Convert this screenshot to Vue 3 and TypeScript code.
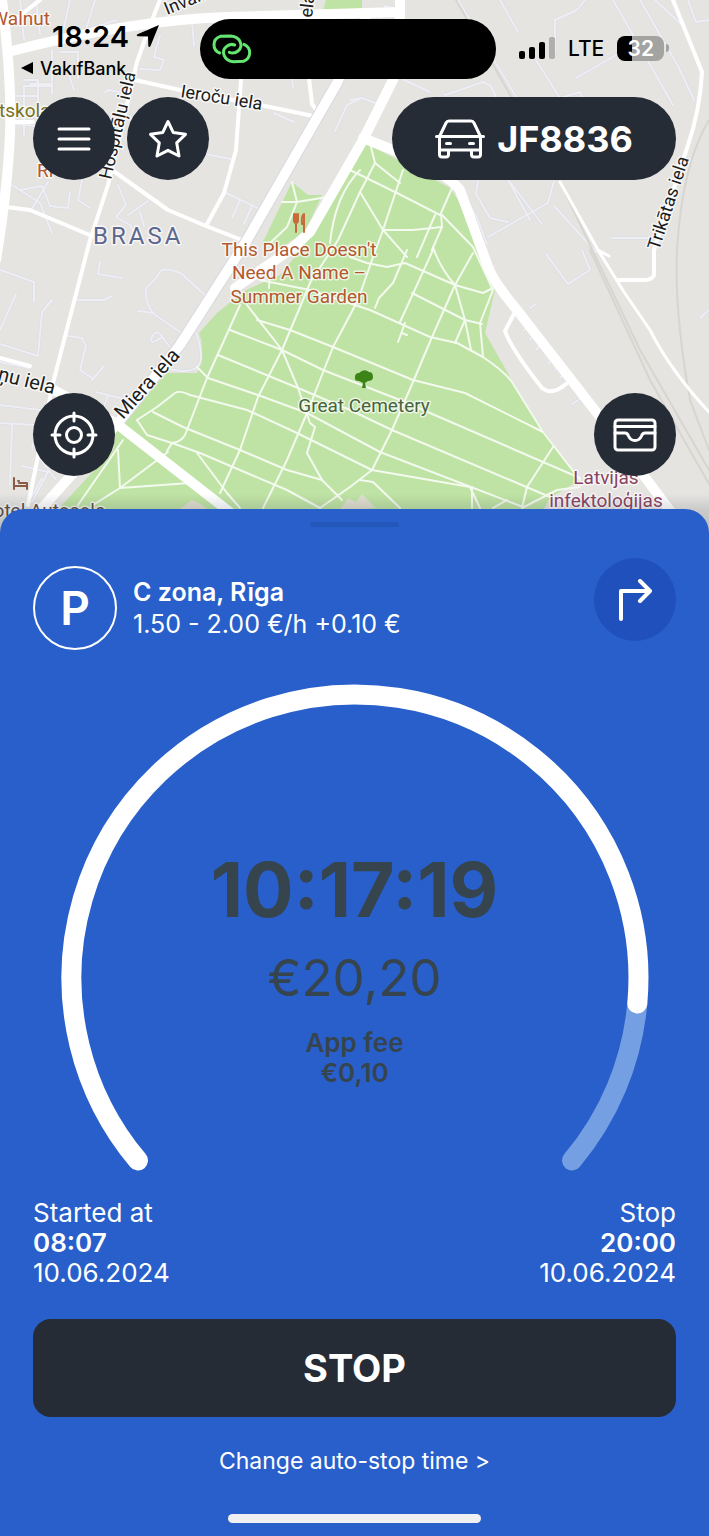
<script setup lang="ts">
interface Moment {
  label: string
  time: string
  date: string
}

const plate = 'JF8836'
const zone = { name: 'C zona, Rīga', price: '1.50 - 2.00 €/h +0.10 €' }
const session = { elapsed: '10:17:19', cost: '€20,20', feeLabel: 'App fee', fee: '€0,10' }
const moments: Moment[] = [
  { label: 'Started at', time: '08:07', date: '10.06.2024' },
  { label: 'Stop', time: '20:00', date: '10.06.2024' },
]

const lanes: string[] = [
  'M20 0L24 40M36 0l4 34M70 0l-6 28M95 0l-9 30 30 -10M52 50v36H24v50M24 80h14v28M16 96h22',
  'M60 52l18 0 0 26M64 60l10 30M30 84l22 0 0 10M160 35l-6 22 10 3-4 10-20-1M192 22l2 24M105 92l4-2 10 2',
  'M16 124l20 2M12 185l28 18 12 30M20 190l22-4 8 20 18 2 2-16M30 212l18-30M84 170l-6 30 12 8M118 185l8 20-10 12 14 8 6 10M128 215l20-14M140 212l4 14',
  'M205 154l26 5M226 193l38 18M240 200l-8 18M252 206l-8 18M292 78l1 10M335 131l12-26 12-6M274 113l20 9',
  'M0 270l34 12 0 20M16 294l-16 36M52 300l-10 12-4 44-38-12M0 362l30 6M100 262l-2 12 24 4M76 300l28 0 8-4M68 336l14 2 4 8-6 24 12 8M92 380l12-14',
  'M210 300l-28-26q-22-10-24 2l-12 12q-2 14 8 26l26 18M138 311l16 2M164 339q-8-12-12-2t10 0l8 10M196 332q10 30 0 36t-30 0',
  'M0 405l40 5M0 423l36 2-4 24M12 425l-2 60M22 466l26 6-16 30M38 456l18 24M42 478l-10 18M96 392l24 6M108 396l-4 10',
  'M375 32l10-26 8 2M350 100l12-2 16 6M404 80l26 12M445 95l38-13 8 4 6 14M458 0l60 100M500 0l18 32M536 60l24 38 20-6 4 8M555 54l0-34 22-10 8-10M576 78l42-24M613 0l60 105M640 0l38 66 16 34M688 0l8 22 13-2M655 0l26 24',
  'M478 180l-2 14 14 24 18 4M488 237l60-34 6-22M510 182l32 42M554 206l42 46M530 220l-22-40M612 238l38 0M546 254l22 30 22-14-8-20M463 192l14 26 10 26',
  'M524 330l5-5M530 340l5-7M536 350l5-6M548 364l6-7M555 370l7-6M560 378l6-6M572 404l8-5M530 308l6-4M700 318l9-8',
]

const cemeteryPaths: string[] = [
  'M240 305L207 378 185 435Q181 442 172 443L167 451',
  'M310 283L282 350 258 397 240 450 220 493',
  'M403 170L383 230 373 257 358 300 333 347 307 413 287 460 263 508',
  'M473 253L455 285 432 337 413 382 392 430 372 470 350 487 320 508',
  'M433 250L400 322M407 250L393 283 379 298 375 308M452 188L441 213 442 227 432 250M435 215L417 257',
  'M433 247Q440 268 455 285L465 320 471 350M465 320L455 343M442 215L473 247 493 290 480 323 483 357',
  'M350 170L397 193 440 215M360 192L383 230 407 257M383 230L413 230 442 227',
  'M370 143L375 163 360 192 338 240 310 283M375 163L400 183',
  'M350 257L367 263 387 267 405 263 455 285 483 293 493 288M412 293L465 320 482 324',
  'M260 280L310 290 370 310 430 337 457 343 483 357Q505 372 512 382L543 432',
  'M257 320L290 330 333 347 413 380 465 393 543 432 580 480',
  'M230 330L282 350 323 370 400 400 580 478',
  'M218 355L298 388 350 410 392 430 510 480 550 497',
  'M197 367L208 378 258 395 307 413 380 452 523 507',
  'M137 420L157 407 175 393Q180 390 190 395L247 410 297 433 372 470 470 487 480 508',
  'M153 412L183 427 240 450 287 470 322 480M137 420L147 435 172 443 200 453 287 490 320 508M197 453L227 493 240 508',
  'M282 350L247 305M282 350L298 388 310 423 315 427 307 453 322 480 342 500',
  'M118 450L120 488 190 483M93 505L120 488 168 452M123 440L78 505',
  'M553 447L527 487 522 508 557 490 580 487M360 480L373 482 400 508M472 487V508M493 508L507 500',
  'M405 323L398 342M402 333L407 335M360 170Q335 195 330 243M270 270L269 288',
  'M282 202L297 202 327 197M292 182L297 202 287 227 268 245',
]
</script>

<template>
  <main class="screen">
    <section class="stage">
      <svg class="map" viewBox="0 0 709 533" preserveAspectRatio="xMidYMin slice" aria-label="Map of Brasa">
        <path class="park" d="M365 143L400 161 450 188 458 200 484 258 495 290 485 333 510 377 543 430 580 480 550 498 530 533 40 533 60 507 113 450 117 424 167 373 197 373Q206 350 199 333L217 313 246 290 280 275 310 238Z" />
        <path class="park" d="M292 182L308 195 322 195 305 232 280 248 262 244ZM326 0H362V14H322Z" />
        <path class="clearing" d="M178 510l14-10 12 6 8 10zM340 510l8-12 8 4 6-8 14 14z" />
        <g class="lane-edge"><path v-for="d in lanes" :key="d" :d="d" /></g>
        <g class="lane"><path v-for="d in lanes" :key="d" :d="d" /></g>
        <g class="trail"><path v-for="d in cemeteryPaths" :key="d" :d="d" /></g>
        <g class="rail">
          <path d="M456 0L516 105M560 182L640 350 709 470M677 250Q674 310 690 400L709 450M709 120Q682 165 677 250M590 250L650 380 709 484" />
        </g>
        <g class="street">
          <path d="M160 0L150 25 137 62 108 185 90 240 53 383 28 505M135 80L180 90 270 107 318 117M241 80L236 150 224 193 206 226M112 170L168 210 206 226 247 242M309 78L312 104 320 115M10 122H33M6 207L30 210 92 236M40 0L12 22" />
          <path d="M673 0L702 72Q700 110 688 145L654 250V275Q652 280 645 280H619M516 310L505 331Q512 350 542 388 552 396 566 384M0 358L30 366" />
          <path class="thin" d="M560 182L598 250 609 256M598 250L624 292 650 330Q670 370 709 412" />
        </g>
        <path class="casing" d="M117 424L180 345 247 240 337 83 366 18" />
        <g class="avenue">
          <path d="M2 0Q12 80 10 133T-4 260" />
          <path d="M8 52Q130 20 227 17T400 12M400 0L400 17 393 80 363 140 310 232 290 250 235 288" />
          <path d="M34 517L117 424 180 345 247 240 337 83 366 18" />
          <path d="M363 138L393 150Q450 175 460 190L487 264Q492 280 517 310L597 413 680 524" />
          <path d="M50 388L117 424 240 520" />
        </g>
        <g class="street-name">
          <text x="167" y="15" transform="rotate(-22 167 15)">Invalīdu</text>
          <text x="312" y="18" transform="rotate(-84 312 18)">ela</text>
          <text x="180" y="97" transform="rotate(9 180 97)">Ieroču iela</text>
          <text x="111" y="180" transform="rotate(-77 111 180)">Hospitāļu iela</text>
          <text x="659" y="251" transform="rotate(-72 659 251)">Trikātas iela</text>
          <text class="major" x="123" y="420" transform="rotate(-48 123 420)">Miera iela</text>
          <text class="major" x="-3" y="380" transform="rotate(14 -3 380)">ņu iela</text>
        </g>
        <text class="district" x="93" y="244">BRASA</text>
        <g class="place food">
          <text x="50" y="25" text-anchor="end">Walnut</text>
          <text x="37" y="177">Ri</text>
          <text x="299" y="256" text-anchor="middle">This Place Doesn't</text>
          <text x="299" y="279" text-anchor="middle">Need A Name –</text>
          <text x="299" y="303" text-anchor="middle">Summer Garden</text>
        </g>
        <path class="fork" d="M294 214v6q0 3 2 3v9M298 214v6q0 3-2 3M296 214v7M304 232v-8h-2q-1-8 2-10z" />
        <text class="place school" x="-1" y="117">tskola</text>
        <text class="place green" x="364" y="412" text-anchor="middle">Great Cemetery</text>
        <path class="tree" d="M362 388l1-5-4-2q-5 0-4-4 0-4 4-4 5-5 10-1 4 0 4 5 0 4-5 4l-3 2 1 5z" />
        <g class="place health">
          <text x="606" y="484" text-anchor="middle">Latvijas</text>
          <text x="606" y="507" text-anchor="middle">infektoloģijas</text>
        </g>
        <text class="place hotel" x="105" y="517" text-anchor="end">otel Autosole</text>
        <path class="bed" d="M14 478v11M14 486h13v3M27 486v-3h-8M18 481h1" />
        <rect x="0" y="494" width="709" height="39" fill="url(#shade)" />
        <defs>
          <linearGradient id="shade" x1="0" y1="0" x2="0" y2="1">
            <stop offset="0" stop-color="#3c4450" stop-opacity="0" />
            <stop offset="0.4" stop-color="#3c4450" stop-opacity="0.16" />
            <stop offset="1" stop-color="#3c4450" stop-opacity="0.25" />
          </linearGradient>
        </defs>
      </svg>

      <div class="overlay">
        <header class="status">
          <div class="status-left">
            <div class="clock">
              <span>18:24</span>
              <svg width="24" height="24" viewBox="0 0 24 24" aria-hidden="true"><path d="M23 1L1 10.500Q0 12 2 12.300L12 12.500 12.300 22Q13 24 14.500 22Z" /></svg>
            </div>
            <a class="back" href="#">
              <svg width="12" height="12" viewBox="0 0 12 12" aria-hidden="true"><path d="M0 6L12 0V12Z" /></svg>
              <span>VakıfBank</span>
            </a>
          </div>
          <div class="island">
            <svg width="40" height="30" viewBox="22 27 120 90" aria-hidden="true">
              <path d="M45 84C22 74 22 42 47 34L78 33C108 35 117 64 100 78C92 85 82 85 74 82" />
              <path d="M118 58C141 68 141 100 116 109L86 110C58 107 48 79 65 65C73 58 83 57 90 60" />
            </svg>
          </div>
          <div class="status-right">
            <svg width="36" height="24" viewBox="0 0 36 24" aria-label="Signal">
              <rect x="0" y="15" width="6" height="8" rx="2" />
              <rect x="10" y="11" width="6" height="12" rx="2" />
              <rect x="20" y="6" width="6" height="17" rx="2" />
              <rect x="30" y="1" width="6" height="22" rx="2" fill="#b0afad" />
            </svg>
            <span class="network">LTE</span>
            <span class="battery"><span class="cell">32</span><span class="nub"></span></span>
          </div>
        </header>

        <nav class="tools">
          <button class="round" type="button" aria-label="Menu">
            <svg width="34" height="26" viewBox="0 0 34 26"><path d="M2 3H32M2 13H32M2 23H32" /></svg>
          </button>
          <button class="round" type="button" aria-label="Favourites">
            <svg width="40" height="40" viewBox="0 0 40 40"><path d="M20 2.500L25.300 13.600 37.500 15.300 28.700 23.800 31 37 20 31.300 9 37 11.300 23.800 2.500 15.300 14.700 13.600Z" /></svg>
          </button>
          <button class="plate" type="button">
            <svg width="50" height="40" viewBox="0 0 50 40" aria-hidden="true">
              <path d="M4.500 17.500L11 4Q12 2 14 2H36Q38 2 39 4L45.500 17.500M1.500 17.500H48.500M4.500 17.500V35.500Q4.500 38 7 38H11Q13.500 38 13.500 35.500V31H36.500V35.500Q36.500 38 39 38H43Q45.500 38 45.500 35.500V17.500M4.500 31H13.500M36.500 31H45.500M11.500 24.500H15.500M34.500 24.500H38.500" />
            </svg>
            <span>{{ plate }}</span>
          </button>
        </nav>

        <div class="tools lower">
          <button class="round" type="button" aria-label="My location">
            <svg width="48" height="48" viewBox="0 0 48 48"><circle cx="24" cy="24" r="19" /><circle cx="24" cy="24" r="7.500" /><path d="M24 2V10M24 38V46M2 24H10M38 24H46" /></svg>
          </button>
          <button class="round" type="button" aria-label="Wallet">
            <svg width="44" height="34" viewBox="0 0 44 34"><rect x="2" y="2" width="40" height="30" rx="3" /><path d="M2 8.500H42M2 15H12Q14.500 15 15.500 18 17.500 22.500 22 22.500T28.500 18Q29.500 15 32 15H42" /></svg>
          </button>
        </div>
      </div>
    </section>

    <section class="sheet">
      <div class="handle"></div>
      <div class="zone">
        <div class="badge">P</div>
        <div class="zone-text">
          <h1>{{ zone.name }}</h1>
          <p>{{ zone.price }}</p>
        </div>
        <button class="route" type="button" aria-label="Directions">
          <svg width="34" height="42" viewBox="0 0 34 42"><path d="M3 40V12H32M22 2L32 12 22 22" /></svg>
        </button>
      </div>

      <div class="gauge">
        <svg viewBox="0 0 588 488" aria-hidden="true">
          <path class="track" d="M576.300 319.500A283.500 283.500 0 0 1 511 476.500" />
          <path class="progress" d="M77 476.500A283.500 283.500 0 1 1 576.300 319.500" />
        </svg>
        <div class="reading">
          <strong class="elapsed">{{ session.elapsed }}</strong>
          <span class="cost">{{ session.cost }}</span>
          <span class="fee">{{ session.feeLabel }}<br />{{ session.fee }}</span>
        </div>
      </div>

      <div class="moments">
        <p v-for="m in moments" :key="m.label">
          {{ m.label }}<br /><b>{{ m.time }}</b><br />{{ m.date }}
        </p>
      </div>

      <button class="stop" type="button">STOP</button>
      <a class="change" href="#">Change auto-stop time &gt;</a>
      <div class="home"></div>
    </section>
  </main>
</template>

<style>
body {
  background: #285fcb;
}
</style>

<style scoped>
.screen {
  display: flex;
  flex-direction: column;
  min-height: 100vh;
  font-family: Inter, "Liberation Sans", sans-serif;
  color: #fff;
}
button {
  border: 0;
  padding: 0;
  color: inherit;
  font: inherit;
  cursor: pointer;
}
a {
  color: inherit;
  text-decoration: none;
}
p,
h1 {
  margin: 0;
}

.stage {
  position: relative;
  overflow: hidden;
  background: #e5e4e1;
}
.map {
  position: absolute;
  inset: 0;
  width: 100%;
  height: 100%;
}
.map path {
  fill: none;
  stroke-linejoin: round;
  stroke-linecap: round;
}
.map .park { fill: #bfe3a4; }
.map .clearing { fill: #dfdfcf; }
.lane-edge { stroke: #dadbe6; stroke-width: 3; }
.lane { stroke: #eeeef3; stroke-width: 2; }
.trail { stroke: #f4faef; stroke-width: 2; }
.rail { stroke: #d6d5d0; stroke-width: 2; }
.street { stroke: #fff; stroke-width: 4; }
.street .thin { stroke-width: 3; }
.map .casing { stroke: #d8d8e2; stroke-width: 12; }
.avenue { stroke: #fff; stroke-width: 10; }
.map text {
  font-family: Roboto, "Noto Sans", sans-serif;
  font-size: 18px;
  paint-order: stroke;
  stroke: #fff;
  stroke-opacity: 0.7;
  stroke-width: 3px;
  stroke-linejoin: round;
}
.street-name { fill: #1c1c1c; }
.map .major { font-size: 20px; }
.map .district {
  font-size: 24px;
  letter-spacing: 3px;
  fill: #5d6690;
}
.map .place,
.map .place text { font-size: 19px; }
.food { fill: #b4582f; }
.school { fill: #77721a; }
.green { fill: #46643a; }
.health { fill: #8a4263; }
.hotel { fill: #5c4b45; }
.map .fork { stroke: #c96a3d; stroke-width: 2; }
.map .tree { fill: #3d8418; }
.map .bed { stroke: #8a5a45; stroke-width: 2; }

.overlay {
  position: relative;
  display: flex;
  flex-direction: column;
  padding-bottom: 57px;
}
.status {
  display: grid;
  grid-template-columns: 200fr 296px 213fr;
  height: 97px;
  color: #000;
}
.status-left {
  padding: 20px 0 0 21px;
}
.clock {
  display: flex;
  align-items: center;
  gap: 7px;
  height: 32px;
  padding-left: 31px;
  font-size: 29px;
  font-weight: 600;
}
.back {
  display: flex;
  align-items: center;
  gap: 7px;
  height: 32px;
  font-size: 18px;
  font-weight: 500;
}
.island {
  display: flex;
  align-items: center;
  height: 60px;
  margin-top: 19px;
  padding-left: 12px;
  box-sizing: border-box;
  border-radius: 30px;
  background: #000;
}
.island svg {
  fill: none;
  stroke: #63e56f;
  stroke-width: 9;
  stroke-linecap: round;
}
.status-right {
  display: flex;
  align-items: center;
  height: 58px;
  margin-top: 19px;
  padding-left: 23px;
}
.network {
  margin: 0 13px;
  font-size: 21px;
  font-weight: 500;
}
.battery {
  display: flex;
  align-items: center;
  gap: 2px;
}
.cell {
  width: 47px;
  height: 25px;
  border-radius: 8px;
  background: linear-gradient(90deg, #000 32%, #a3a3a2 32%);
  color: #fff;
  font-size: 21px;
  font-weight: 600;
  line-height: 25px;
  text-align: center;
}
.nub {
  width: 3px;
  height: 8px;
  border-radius: 0 3px 3px 0;
  background: #a3a3a2;
}

.tools {
  display: flex;
  gap: 12px;
  padding: 0 33px;
}
.tools svg,
.route svg {
  fill: none;
  stroke: #fff;
  stroke-width: 3;
  stroke-linecap: round;
  stroke-linejoin: round;
}
.round {
  display: grid;
  place-items: center;
  width: 82px;
  height: 83px;
  border-radius: 50%;
  background: #252c35;
}
.plate {
  display: flex;
  align-items: center;
  justify-content: center;
  gap: 12px;
  width: 284px;
  height: 83px;
  margin-left: auto;
  border-radius: 42px;
  background: #252c35;
  font-size: 36px;
  font-weight: 700;
}
.lower {
  justify-content: space-between;
  margin-top: 213px;
}

.sheet {
  position: relative;
  display: flex;
  flex: 1;
  flex-direction: column;
  align-items: center;
  margin-top: -24px;
  padding: 13px 33px;
  border-radius: 24px 24px 0 0;
  background: #285fcb;
}
.handle {
  width: 89px;
  height: 5px;
  border-radius: 3px;
  background: #2457ba;
}
.zone {
  display: flex;
  align-self: stretch;
  align-items: flex-start;
  gap: 16px;
  margin-top: 31px;
}
.badge {
  display: grid;
  place-items: center;
  width: 84px;
  height: 84px;
  margin-top: 8px;
  box-sizing: border-box;
  border: 2px solid #fff;
  border-radius: 50%;
  font-size: 46px;
  font-weight: 600;
}
.zone-text {
  flex: 1;
  padding-top: 18px;
  font-size: 25px;
  line-height: 32px;
}
.zone-text h1 {
  font-size: 25px;
  font-weight: 600;
}
.route {
  display: grid;
  place-items: center;
  width: 82px;
  height: 83px;
  border-radius: 50%;
  background: #2050bb;
}
.route svg {
  stroke-width: 4;
}
.gauge {
  display: grid;
  width: 100%;
  max-width: 588px;
  margin-top: 34px;
}
.gauge svg,
.reading {
  grid-area: 1 / 1;
}
.gauge path {
  fill: none;
  stroke-width: 20;
  stroke-linecap: round;
}
.track { stroke: #749fe2; }
.progress { stroke: #fff; }
.reading {
  display: flex;
  flex-direction: column;
  align-items: center;
  padding-top: 166px;
  color: #36444e;
}
.elapsed {
  font-size: 75px;
  font-weight: 700;
  line-height: 80px;
}
.cost {
  margin-top: 18px;
  font-size: 51px;
  line-height: 60px;
}
.fee {
  margin-top: 20px;
  font-size: 26px;
  font-weight: 600;
  line-height: 30px;
  text-align: center;
}
.moments {
  display: flex;
  align-self: stretch;
  justify-content: space-between;
  margin-top: 26px;
  font-size: 26px;
  line-height: 30px;
}
.moments b {
  font-weight: 600;
}
.moments p:last-child {
  text-align: right;
}
.stop {
  align-self: stretch;
  height: 98px;
  margin-top: 31px;
  border-radius: 18px;
  background: #252c35;
  font-size: 38px;
  font-weight: 700;
}
.change {
  margin-top: 30px;
  font-size: 23px;
  line-height: 28px;
}
.home {
  width: 253px;
  height: 9px;
  margin-top: auto;
  border-radius: 5px;
  background: #f0f0f2;
}
</style>
